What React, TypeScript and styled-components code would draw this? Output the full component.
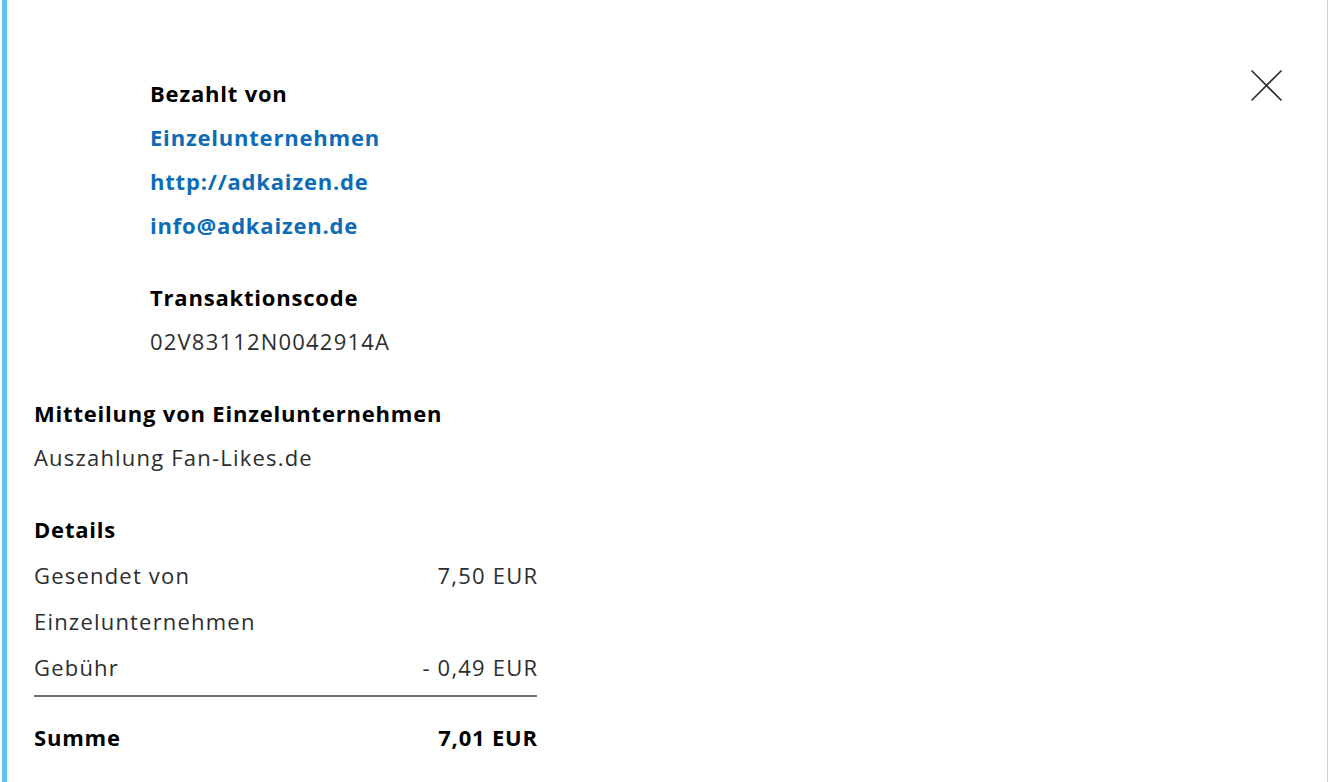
import styled, { createGlobalStyle } from 'styled-components';

const GlobalStyle = createGlobalStyle`
  html, body {
    margin: 0;
    padding: 0;
    background: #ffffff;
  }
  body {
    font-family: "Open Sans", Lato, "Noto Sans", sans-serif;
    color: #2c2e2f;
  }
`;

const Panel = styled.div`
  position: relative;
  box-sizing: border-box;
  height: 782px;
  margin-left: 2px;
  width: 1326px;
  border-left: 5px solid #5bc4f1;
  border-right: 1px solid #cfcfcf;
  background: #fff;
  padding: 71px 0 0 27px;
  overflow: hidden;
`;

const CloseButton = styled.button`
  position: absolute;
  top: 69px;
  right: 44px;
  width: 33px;
  height: 33px;
  padding: 0;
  border: none;
  background: transparent;
  cursor: pointer;
  svg {
    display: block;
  }
`;

const Indented = styled.div`
  padding-left: 116px;
`;

type SectionProps = { $gap?: number };

const Section = styled.section<SectionProps>`
  margin-top: ${(p) => p.$gap ?? 28}px;
  &:first-child {
    margin-top: 0;
  }
`;

const Heading = styled.h3`
  margin: 0;
  font-size: 22px;
  line-height: 44px;
  font-weight: 700;
  letter-spacing: 0.8px;
  color: #000;
`;

const Link = styled.a`
  display: block;
  font-size: 22px;
  line-height: 44px;
  font-weight: 700;
  letter-spacing: 0.8px;
  color: #0e6cb6;
  text-decoration: none;
`;

const Text = styled.p`
  margin: 0;
  font-size: 22px;
  line-height: 44px;
  letter-spacing: 1.2px;
  color: #2c2e2f;
`;

const DetailsTable = styled.div`
  width: 503px;
`;

const DetailsHeading = styled(Heading)`
  line-height: 45px;
`;

type RowProps = { $bold?: boolean };

const Row = styled.div<RowProps>`
  display: flex;
  justify-content: space-between;
  align-items: center;
  font-size: 22px;
  line-height: 46px;
  letter-spacing: ${(p) => (p.$bold ? 0.8 : 1.2)}px;
  font-weight: ${(p) => (p.$bold ? 700 : 400)};
  color: ${(p) => (p.$bold ? '#000' : '#2c2e2f')};
  span:last-child {
    margin-right: -${(p) => (p.$bold ? 0.8 : 1.2)}px;
  }
`;

const Divider = styled.hr`
  margin: 5px 0 0;
  border: none;
  border-top: 2px solid #6f6f6f;
`;

const TotalRow = styled(Row)`
  margin-top: 17px;
`;

function CloseIcon() {
  return (
    <svg width="33" height="33" viewBox="0 0 33 33" fill="none">
      <path d="M1.5 1.5 L31.5 31.5 M31.5 1.5 L1.5 31.5" stroke="#2c2e2f" strokeWidth="1.6" />
    </svg>
  );
}

export default function App() {
  return (
    <>
      <GlobalStyle />
      <Panel>
        <CloseButton aria-label="Schließen">
          <CloseIcon />
        </CloseButton>
        <Indented>
          <Section>
            <Heading>Bezahlt von</Heading>
            <Link href="#">Einzelunternehmen</Link>
            <Link href="#">http://adkaizen.de</Link>
            <Link href="#">info@adkaizen.de</Link>
          </Section>
          <Section>
            <Heading>Transaktionscode</Heading>
            <Text>02V83112N0042914A</Text>
          </Section>
        </Indented>
        <Section>
          <Heading>Mitteilung von Einzelunternehmen</Heading>
          <Text>Auszahlung Fan-Likes.de</Text>
        </Section>
        <Section>
          <DetailsTable>
            <DetailsHeading>Details</DetailsHeading>
            <Row>
              <span>Gesendet von</span>
              <span>7,50 EUR</span>
            </Row>
            <Row>
              <span>Einzelunternehmen</span>
            </Row>
            <Row>
              <span>Gebühr</span>
              <span>- 0,49 EUR</span>
            </Row>
            <Divider />
            <TotalRow $bold>
              <span>Summe</span>
              <span>7,01 EUR</span>
            </TotalRow>
          </DetailsTable>
        </Section>
      </Panel>
    </>
  );
}
